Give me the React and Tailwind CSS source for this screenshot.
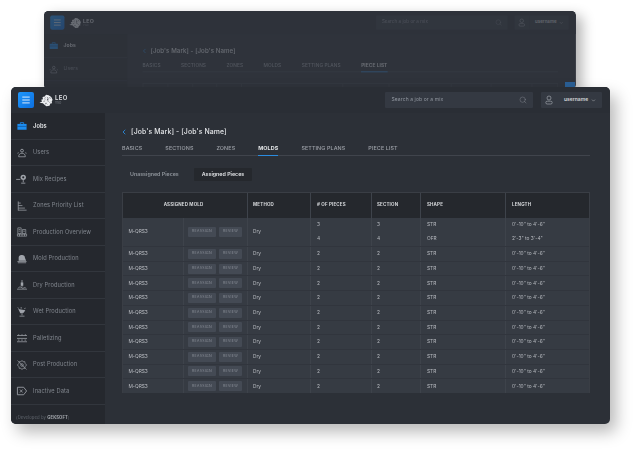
import React from 'react';
import { Search, ChevronDown, ChevronLeft, Menu } from 'lucide-react';

const navItems = [
  { label: 'Jobs', icon: 'jobs', active: true },
  { label: 'Users', icon: 'users' },
  { label: 'Mix Recipes', icon: 'mix' },
  { label: 'Zones Priority List', icon: 'zones' },
  { label: 'Production Overview', icon: 'overview' },
  { label: 'Mold Production', icon: 'mold' },
  { label: 'Dry Production', icon: 'dry' },
  { label: 'Wet Production', icon: 'wet' },
  { label: 'Palletizing', icon: 'pallet' },
  { label: 'Post Production', icon: 'post' },
  { label: 'Inactive Data', icon: 'inactive' },
];

const tabs = ['BASICS', 'SECTIONS', 'ZONES', 'MOLDS', 'SETTING PLANS', 'PIECE LIST'];
const rows = Array.from({ length: 10 });
const backCols = [28, 28, 27, 28, 114, 53, 70, 45, 46, 28];

const NavIcon = ({ name, active }) => {
  const color = active ? '#1d8df0' : '#a0a4ab';
  const common = { fill: 'none', stroke: color, strokeWidth: 1 };
  return (
    <svg viewBox="0 0 12 12" className="w-[10px] h-[10px] shrink-0 overflow-visible">
      {name === 'jobs' && (
        <>
          <rect x="0.500" y="3.500" width="11" height="7" fill={color} />
          <path d="M4 3.500V2h4v1.500" {...common} />
          <path d="M.5 6.500h11" stroke="#0c3d6e" strokeWidth="0.6" />
        </>
      )}
      {name === 'users' && (
        <>
          <circle cx="6" cy="3.200" r="1.700" {...common} />
          <path d="M2 10.500c0-3 1.800-4.200 4-4.200s4 1.200 4 4.200z" {...common} strokeWidth=".9" />
          <path d="M1 7c0-1 .3-1.500 1-2M11 7c0-1-.3-1.500-1-2" {...common} strokeWidth=".7" />
        </>
      )}
      {name === 'mix' && (
        <>
          <circle cx="7.500" cy="4" r="3.200" fill={color} />
          <circle cx="7.500" cy="4" r="1.300" fill="#25282e" />
          <path d="M7.500 7v3M5 11h5M-1 6.500h5" {...common} />
        </>
      )}
      {name === 'zones' && <path d="M1.500 .5v11M1.500 2.500h3M1.500 5.500h5M1.500 8.500h8M1.500 11h10" {...common} strokeWidth=".9" />}
      {name === 'overview' && (
        <>
          <path d="M1 1h4v7H1zM6.500 3h4v5h-4z" {...common} strokeWidth=".8" />
          <path d="M2 3h2M2 5h2M7.500 5h2" {...common} strokeWidth=".8" />
          <path d="M.5 8.500h11v2.500H.5zM3 8.500V11M6 8.500V11M9 8.500V11" {...common} strokeWidth=".8" />
        </>
      )}
      {name === 'mold' && (
        <>
          <path d="M2 8V5.500a3.800 3.800 0 0 1 7.600-.8L11 8z" fill={color} />
          <path d="M.5 9h11M1 10.500h10" {...common} strokeWidth=".9" />
        </>
      )}
      {name === 'dry' && (
        <>
          <path d="M6 0v8" {...common} />
          <path d="M4.500 3h3v4h-3z" fill={color} />
          <path d="M1.500 9.500c1.500-1.500 3-1.500 4.500 0s3-1.500 4.500 0M0 11h12" {...common} strokeWidth=".9" />
        </>
      )}
      {name === 'wet' && (
        <>
          <path d="M1.500 2.500l8.500 1.500-2 3-4 .5z" fill={color} />
          <path d="M6 7v3M3 11h6M1 .5l1 1.500M5 0v2M10 1l-1 1.500" {...common} strokeWidth=".9" />
        </>
      )}
      {name === 'pallet' && (
        <path d="M0 3h12M0 6.500h12M0 10.500h12M2 1.500V3M6 1.500V3M10 1.500V3M1 8.500h2M5 8.500h2M9 8.500h2" {...common} strokeWidth=".9" />
      )}
      {name === 'post' && (
        <>
          <path d="M6 .5l1.300 1.700 2-.3.3 2L11.500 6l-1.900 2.100-.3 2-2-.3L6 11.500l-1.300-1.700-2 .3-.3-2L.5 6l1.900-2.100.3-2 2 .3z" {...common} strokeWidth=".8" />
          <path d="M.5 .5l11 11" {...common} strokeWidth=".7" />
          <circle cx="6" cy="6" r="1.600" {...common} strokeWidth=".8" />
        </>
      )}
      {name === 'inactive' && (
        <>
          <path d="M.5 1.500h7.500l3.500 4.500-3.500 4.500H.5z" {...common} />
          <path d="M3.500 4.200l3.200 3.600M6.700 4.200l-3.200 3.600" {...common} strokeWidth=".9" />
        </>
      )}
    </svg>
  );
};

// eagle head mark, light with darker feather flecks
const Logo = () => (
  <svg viewBox="0 0 16 14" className="w-[14px] h-[13px] shrink-0">
    <path d="M0.500 9.500l3-1.500-1-2 2-.5L4 3l2.500-.5L8 .5l3 .5 3 2 1.500 3-1 2.500.5 1.500-2 .5-1 2.500-3.500.5-2-1.500L4.500 10z" fill="#eceef1" />
    <path d="M6 5l1.500.5M9 3l2 1.500M5 8l2-.5M9 7l2.500 1M8 10l1.500 1.500M12 3l1 2M6.500 3l1 .5M7 11.500l1-2M12 9.500l1-1" stroke="#5a5e66" strokeWidth=".7" />
    <circle cx="10" cy="5.500" r=".8" fill="#3a3e46" />
  </svg>
);

const Tag = ({ width, children }) => (
  <span className={`flex items-center justify-center h-[10px] rounded-[1px] bg-[#444a54] text-[3.500px] tracking-[0.3px] text-[#8b9099] ${width}`}>
    {children}
  </span>
);

const Cell = ({ className = '', children }) => (
  <div className={`flex items-center border-r border-[#3e434b] last:border-r-0 ${className}`}>{children}</div>
);

const StackCell = ({ className = '', children }) => (
  <div className={`flex flex-col justify-around border-r border-[#3e434b] last:border-r-0 ${className}`}>{children}</div>
);

const cols = 'grid grid-cols-[61px_64px_63px_61px_49px_85px_85px]';

const Tags = () => (
  <Cell className="pl-[4px] gap-[3px]">
    <Tag width="w-[28px]">REASSIGN</Tag>
    <Tag width="w-[23px]">REVIEW</Tag>
  </Cell>
);

const Row = () => (
  <div className={`${cols} flex-1 border-b border-[#31353d] last:border-b-0 text-[4.800px] text-[#b9bcc2]`}>
    <Cell className="pl-[5.500px]">M-QRS3</Cell>
    <Tags />
    <Cell className="pl-[5px]">Dry</Cell>
    <Cell className="pl-[6px]">2</Cell>
    <Cell className="pl-[5px]">2</Cell>
    <Cell className="pl-[6px]">STR</Cell>
    <Cell className="pl-[6px]">0'-10" to 4'-6"</Cell>
  </div>
);

const Table = () => (
  <div className="mt-[11px] border border-[#3a3e45] border-b-0 h-[201px] flex flex-col">
    <div className={`${cols} h-[25px] shrink-0 bg-[#25282d] text-[4.500px] font-bold text-[#d5d7da] tracking-[0.15px]`}>
      <Cell className="col-span-2 justify-center pr-[3px]">ASSIGNED MOLD</Cell>
      <Cell className="pl-[5px]">METHOD</Cell>
      <Cell className="pl-[6px]"># OF PIECES</Cell>
      <Cell className="pl-[5px]">SECTION</Cell>
      <Cell className="pl-[6px]">SHAPE</Cell>
      <Cell className="pl-[6px]">LENGTH</Cell>
    </div>
    <div className="flex-1 flex flex-col bg-[#363b43]">
      <div className={`${cols} h-[29px] shrink-0 border-b border-[#31353d] text-[4.800px] text-[#b9bcc2]`}>
        <Cell className="pl-[5.500px]">M-QRS3</Cell>
        <Tags />
        <Cell className="pl-[5px]">Dry</Cell>
        <StackCell className="pl-[6px]"><span>3</span><span>4</span></StackCell>
        <StackCell className="pl-[5px]"><span>3</span><span>4</span></StackCell>
        <StackCell className="pl-[6px]"><span>STR</span><span>OFR</span></StackCell>
        <StackCell className="pl-[6px]"><span>0'-10" to 4'-6"</span><span>2'-3" to 3'-4"</span></StackCell>
      </div>
      {rows.map((_, i) => <Row key={i} />)}
    </div>
  </div>
);

const UserGlyph = () => (
  <svg viewBox="0 0 10 12" className="w-[8px] h-[10px]" fill="none" stroke="#a9adb4" strokeWidth=".8">
    <circle cx="5" cy="3.500" r="2.500" />
    <rect x="1" y="7.500" width="8" height="3.500" rx="1.700" />
  </svg>
);

const Header = () => (
  <div className="h-[26px] shrink-0 flex items-center bg-[#2a2e35] pl-[7px] pr-[8px]">
    <div className="w-[16px] h-[16px] rounded-[2px] bg-gradient-to-br from-[#1f97fb] to-[#0d6fe0] flex items-center justify-center">
      <Menu size={10} color="#ffffff" strokeWidth={2} />
    </div>
    <div className="ml-[5px]"><Logo /></div>
    <div className="ml-[2px] leading-none">
      <div className="text-[6px] font-semibold text-[#e2e4e7] tracking-[0.3px]">LEO</div>
      <div className="text-[3px] text-[#7d828a] mt-[0.500px]">YSO</div>
    </div>
    <div className="ml-auto w-[148px] h-[16px] rounded-[1px] bg-[#343942] flex items-center pl-[7px] pr-[5.500px] text-[5px] tracking-[0.1px] text-[#9197a0]">
      <span>Search a job or a mix</span>
      <Search size={8} className="ml-auto text-[#a0a5ac]" strokeWidth={1} />
    </div>
    <div className="ml-[8px] h-[16px] flex">
      <div className="w-[17px] bg-[#343942] rounded-l-[1px] flex items-center justify-center">
        <UserGlyph />
      </div>
      <div className="ml-[0.500px] w-[44px] bg-[#343942] rounded-r-[1px] flex items-center pl-[6px] text-[5px] font-semibold text-[#d3d5d9]">
        username
        <ChevronDown size={5} className="ml-[3px]" strokeWidth={2} />
      </div>
    </div>
  </div>
);

const Sidebar = ({ items, footer }) => (
  <aside className="w-[94px] shrink-0 flex flex-col bg-[#25282e]">
    {items.map((item) => (
      <div
        key={item.label}
        className={`h-[26.500px] shrink-0 flex items-center gap-[6px] pl-[6px] pt-[1px] border-b border-[#32363d] text-[5.700px] tracking-[0.1px] ${item.active ? 'text-[#e6e8ea] font-semibold' : 'text-[#82878f]'}`}
      >
        <NavIcon name={item.icon} active={item.active} />
        <span>{item.label}</span>
      </div>
    ))}
    {footer && (
      <div className="pl-[5px] mt-[10px] text-[4.200px] tracking-[0.1px] text-[#5f646c] whitespace-nowrap">
        (Developed by <span className="font-bold text-[#a5a9af]">GEKSOFT</span>)
      </div>
    )}
  </aside>
);

const Tabs = ({ activeTab }) => (
  <div className="mt-[3.500px] h-[15px] border-b border-[#40444c] flex gap-[23px] text-[5.400px] font-medium tracking-[0.1px] text-[#9da1a8]">
    {tabs.map((t) => (
      <div
        key={t}
        className={`h-[15px] pt-[3px] ${t === activeTab ? 'text-[#e4e6e8] font-bold border-b border-[#2b8ce0]' : ''}`}
      >
        {t}
      </div>
    ))}
  </div>
);

const Window = ({ className, items, footer, activeTab, children }) => (
  <div className={`absolute flex flex-col rounded-[5px] overflow-hidden bg-[#2c3037] font-['Inter',sans-serif] ${className}`}>
    <Header />
    <div className="flex flex-1 min-h-0">
      <Sidebar items={items} footer={footer} />
      <main className="flex-1 min-w-0 pl-[17px] pr-[20px] pt-[12.500px]">
        <div className="flex items-center gap-[3px] text-[6.900px] font-medium tracking-[0.1px] text-[#e2e4e7] leading-[12px]">
          <ChevronLeft size={8} color="#2a8fe6" strokeWidth={2.500} className="-ml-[2px]" />
          <span>[Job's Mark] - [Job's Name]</span>
        </div>
        <Tabs activeTab={activeTab} />
        {children}
      </main>
    </div>
  </div>
);

const App = () => (
  <div className="relative w-[635px] h-[450px] overflow-hidden bg-white">
    <div className="absolute left-[44px] top-[11px] w-[599px] h-[88px] origin-top-left scale-[0.888] rounded-[5px] overflow-hidden shadow-[6px_6px_14px_rgba(0,0,0,0.3)]">
      <Window className="inset-0" items={navItems.slice(0, 2)} activeTab="PIECE LIST">
        <div className="mt-[12px] flex h-[20px] border border-[#3c4047]">
          {backCols.map((w, i) => (
            <div key={i} className="border-r border-[#3c4047] last:border-r-0" style={{ width: w }} />
          ))}
        </div>
      </Window>
      <div className="absolute inset-0 bg-[#31353d]/70" />
    </div>
    <div className="absolute left-[565px] top-[82px] w-[10px] h-[6px] bg-[#2a5f95]" />
    <Window
      className="left-[11px] top-[87px] w-[599px] h-[337px] shadow-[6px_8px_16px_rgba(0,0,0,0.28)]"
      items={navItems}
      footer
      activeTab="MOLDS"
    >
      <div className="mt-[12px] flex text-[5.300px] font-semibold">
        <div className="w-[72px] h-[13px] pl-[8px] flex items-center text-[#8f949b]">Unassigned Pieces</div>
        <div className="w-[58px] h-[13px] flex items-center justify-center rounded-[1px] bg-[#25282d] text-[#dfe1e4]">Assigned Pieces</div>
      </div>
      <Table />
    </Window>
  </div>
);

export default App;
